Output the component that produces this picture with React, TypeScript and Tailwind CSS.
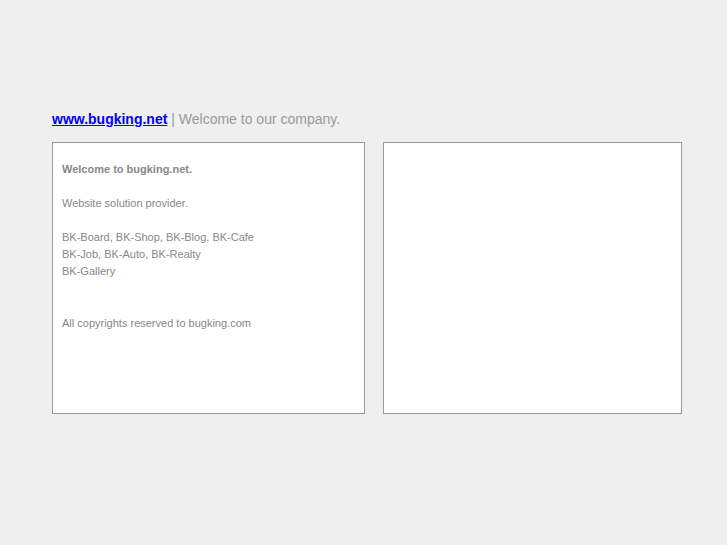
import React from "react";

export default function App() {
  return (
    <div className="w-[727px] h-[545px] bg-[#efefef] font-['Liberation_Sans',Arial,sans-serif]">
      <div className="pt-[110px] pl-[52px]">
        <div className="text-[14px] leading-[18px] text-[#999999]">
          <a href="#" className="text-[#0000ff] font-bold underline">www.bugking.net</a>{" "}| Welcome to our company.
        </div>
        <div className="flex gap-[18px] mt-[14px]">
          <div className="w-[313px] h-[272px] bg-white border border-[#999999] pl-[9px] pt-[18px] text-[11px] leading-[17px] text-[#888888]">
            <div className="font-bold">Welcome to bugking.net.</div>
            <div className="mt-[17px]">Website solution provider.</div>
            <div className="mt-[17px]">BK-Board, BK-Shop, BK-Blog, BK-Cafe</div>
            <div>BK-Job, BK-Auto, BK-Realty</div>
            <div>BK-Gallery</div>
            <div className="mt-[35px]">All copyrights reserved to bugking.com</div>
          </div>
          <div className="w-[299px] h-[272px] bg-white border border-[#999999]"></div>
        </div>
      </div>
    </div>
  );
}
